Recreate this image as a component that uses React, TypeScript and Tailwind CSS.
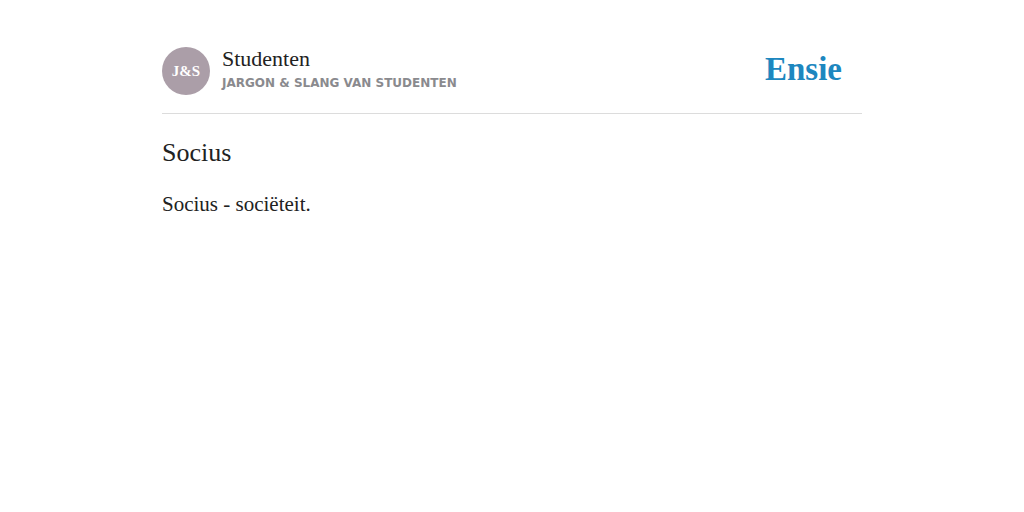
import React from 'react'

interface HeaderProps {
  initials: string
  title: string
  subtitle: string
}

const Header: React.FC<HeaderProps> = ({ initials, title, subtitle }) => {
  return (
    <header className="flex items-start justify-between border-b border-[#dcdcdc] pb-[18px]">
      <a href="#" className="flex items-start gap-3">
        <div className="flex h-12 w-12 shrink-0 items-center justify-center rounded-full bg-[#ab9ea8] text-[15px] font-bold text-white">
          {initials}
        </div>
        <div>
          <p className="text-[22px] leading-6">{title}</p>
          <p className="font-['DejaVu_Sans',sans-serif] text-xs leading-6 font-bold text-[#8a8a8e] uppercase">
            {subtitle}
          </p>
        </div>
      </a>
      <a href="#" className="pr-5 text-[33px] leading-11 font-bold text-[#1d87bf]">
        Ensie
      </a>
    </header>
  )
}

const App: React.FC = () => {
  return (
    <div className="mx-auto max-w-[700px] pt-[47px] font-['Liberation_Serif',serif] text-[#222222]">
      <Header initials="J&S" title="Studenten" subtitle="Jargon & slang van studenten" />
      <main className="pt-6">
        <h1 className="text-[26px] leading-[30px]">Socius</h1>
        <p className="pt-5 text-[21px] leading-8">Socius - sociëteit.</p>
      </main>
    </div>
  )
}

export default App
